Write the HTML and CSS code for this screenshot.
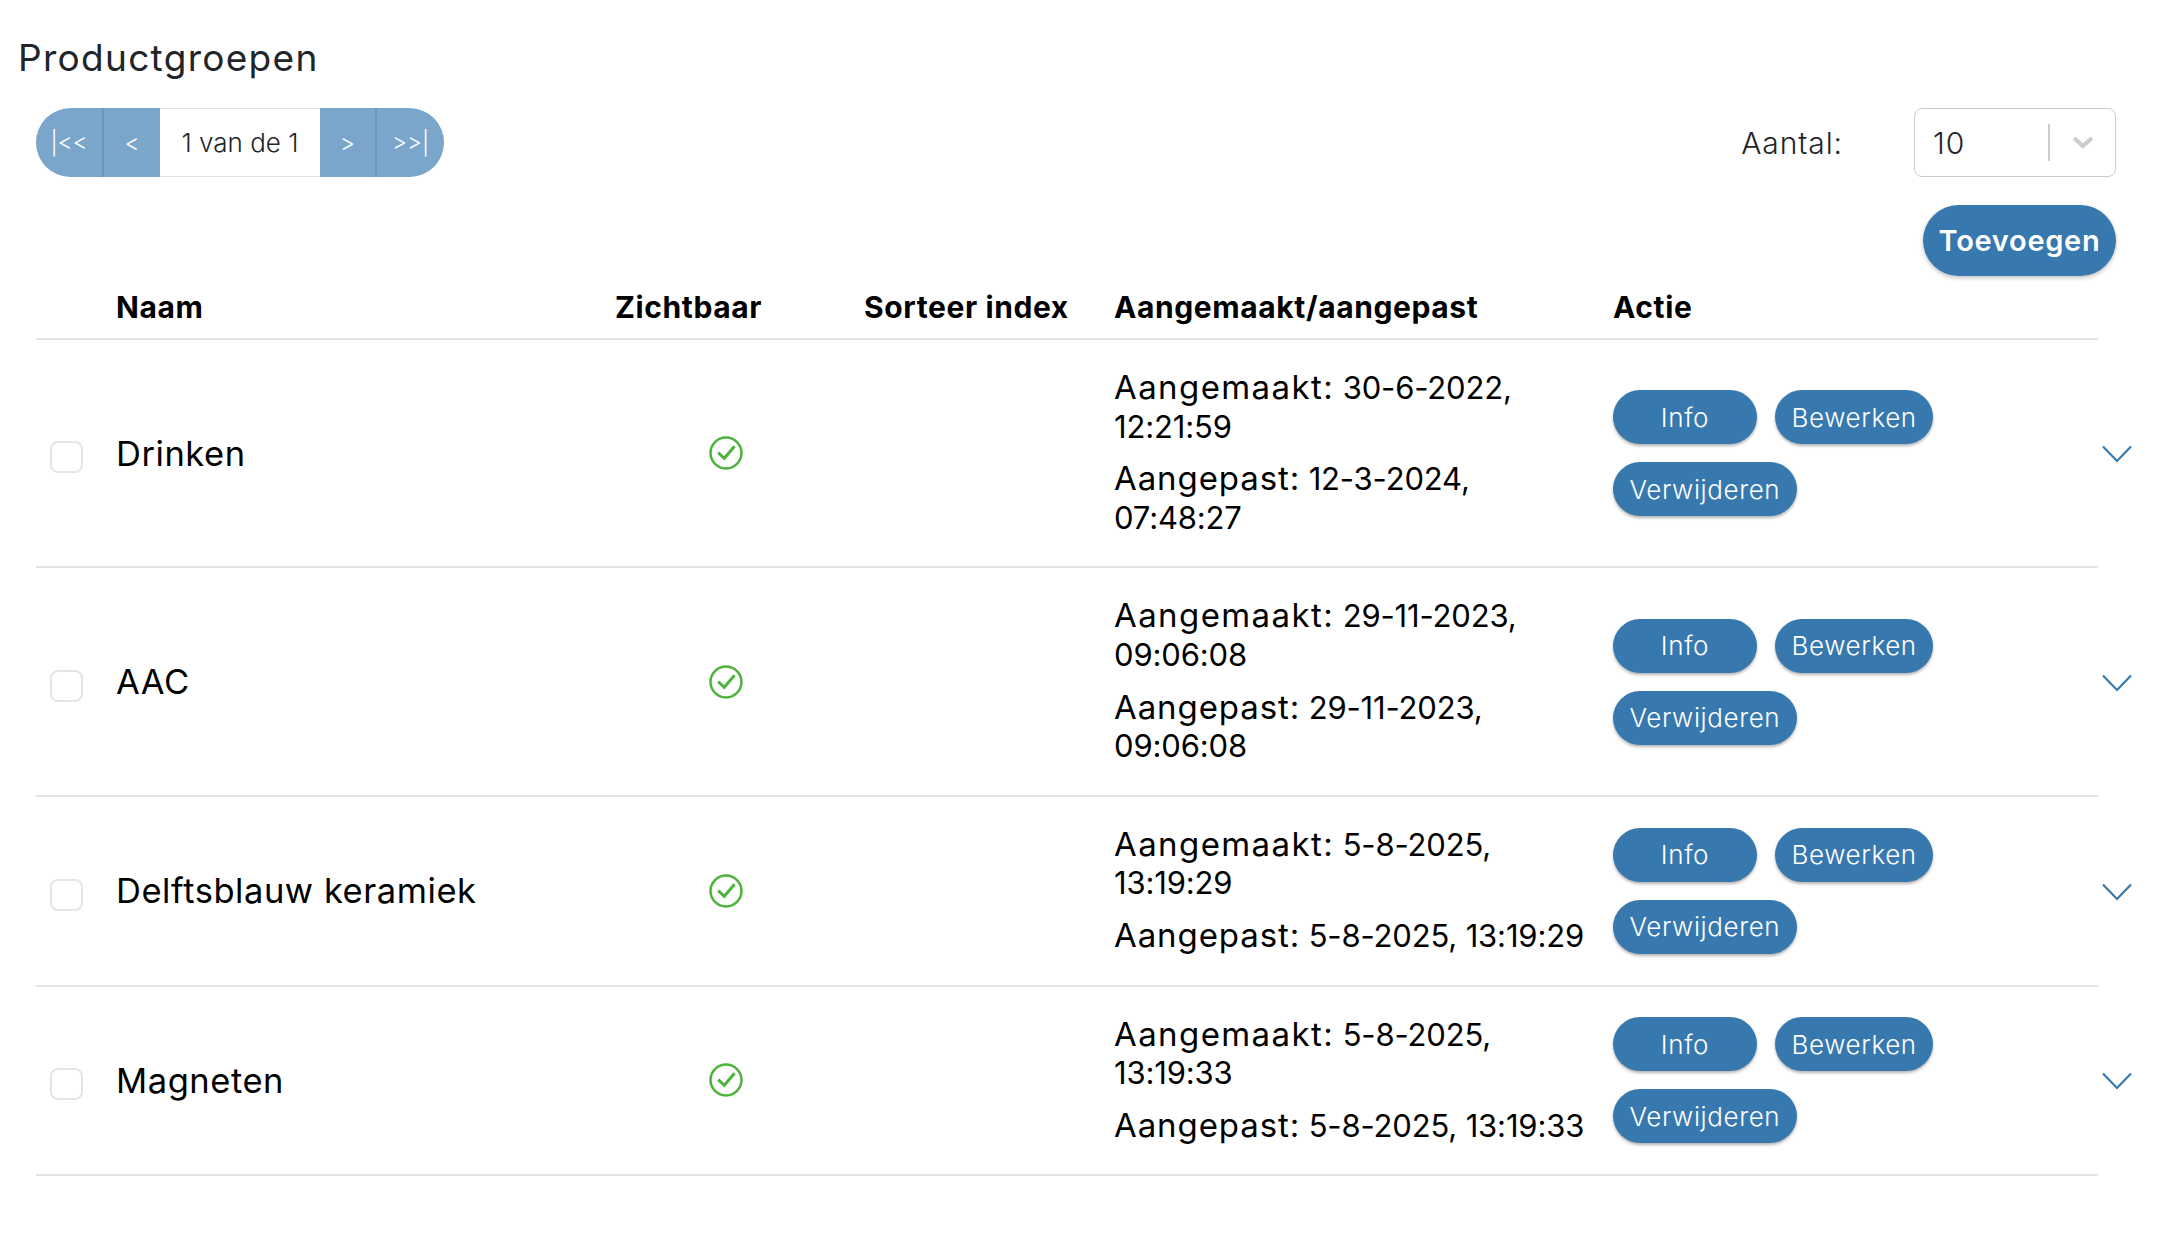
FILE: index.html
```html
<!DOCTYPE html>
<html lang="nl">

<head>
    <meta charset="UTF-8">
    <title>Productgroepen</title>
    <link rel="stylesheet" href="styles.css">
</head>

<body>

    <h1 class="page-title">Productgroepen</h1>

    <div class="toolbar">
        <div class="pager">
            <button class="pager-btn pager-first">|&lt;&lt;</button>
            <button class="pager-btn pager-prev">&lt;</button>
            <span class="pager-label">1 van de 1</span>
            <button class="pager-btn pager-next">&gt;</button>
            <button class="pager-btn pager-last">&gt;&gt;|</button>
        </div>
        <div class="page-size">
            <span class="page-size-label">Aantal:</span>
            <div class="select">
                <span class="select-value">10</span>
                <span class="select-sep"></span>
                <svg class="select-arrow" width="22" height="13" viewBox="0 0 22 13"><polyline points="2,2 11,10 20,2" /></svg>
            </div>
        </div>
    </div>

    <div class="add-row">
        <button class="add-btn">Toevoegen</button>
    </div>

    <table class="groups">
        <colgroup>
            <col class="col-select">
            <col class="col-name">
            <col class="col-visible">
            <col class="col-sort">
            <col class="col-date">
            <col class="col-action">
            <col class="col-toggle">
        </colgroup>
        <thead>
            <tr>
                <th></th>
                <th>Naam</th>
                <th>Zichtbaar</th>
                <th>Sorteer index</th>
                <th>Aangemaakt/aangepast</th>
                <th>Actie</th>
                <th class="toggle-cell"></th>
            </tr>
        </thead>
        <tbody>
            <tr>
                <td><span class="checkbox"></span></td>
                <td class="name">Drinken</td>
                <td class="visible"><svg width="34" height="34" viewBox="0 0 34 34"><circle cx="17" cy="17" r="15.5" /><polyline points="9.2,16.7 15.3,22.3 25.5,10.3" /></svg></td>
                <td></td>
                <td class="dates">
                    <p><span class="date-label">Aangemaakt:</span> 30-6-2022,<br>12:21:59</p>
                    <p><span class="date-label date-label-changed">Aangepast:</span> 12-3-2024,<br>07:48:27</p>
                </td>
                <td>
                    <div class="actions">
                        <button class="action-btn btn-info">Info</button>
                        <button class="action-btn">Bewerken</button>
                        <button class="action-btn">Verwijderen</button>
                    </div>
                </td>
                <td class="toggle-cell"><svg width="30" height="18" viewBox="0 0 30 18"><polyline points="1,1.5 15,16 29,1.5" /></svg></td>
            </tr>
            <tr>
                <td><span class="checkbox"></span></td>
                <td class="name">AAC</td>
                <td class="visible"><svg width="34" height="34" viewBox="0 0 34 34"><circle cx="17" cy="17" r="15.5" /><polyline points="9.2,16.7 15.3,22.3 25.5,10.3" /></svg></td>
                <td></td>
                <td class="dates">
                    <p><span class="date-label">Aangemaakt:</span> 29-11-2023,<br>09:06:08</p>
                    <p><span class="date-label date-label-changed">Aangepast:</span> 29-11-2023,<br>09:06:08</p>
                </td>
                <td>
                    <div class="actions">
                        <button class="action-btn btn-info">Info</button>
                        <button class="action-btn">Bewerken</button>
                        <button class="action-btn">Verwijderen</button>
                    </div>
                </td>
                <td class="toggle-cell"><svg width="30" height="18" viewBox="0 0 30 18"><polyline points="1,1.5 15,16 29,1.5" /></svg></td>
            </tr>
            <tr>
                <td><span class="checkbox"></span></td>
                <td class="name">Delftsblauw keramiek</td>
                <td class="visible"><svg width="34" height="34" viewBox="0 0 34 34"><circle cx="17" cy="17" r="15.5" /><polyline points="9.2,16.7 15.3,22.3 25.5,10.3" /></svg></td>
                <td></td>
                <td class="dates">
                    <p><span class="date-label">Aangemaakt:</span> 5-8-2025,<br>13:19:29</p>
                    <p><span class="date-label date-label-changed">Aangepast:</span> 5-8-2025, 13:19:29</p>
                </td>
                <td>
                    <div class="actions">
                        <button class="action-btn btn-info">Info</button>
                        <button class="action-btn">Bewerken</button>
                        <button class="action-btn">Verwijderen</button>
                    </div>
                </td>
                <td class="toggle-cell"><svg width="30" height="18" viewBox="0 0 30 18"><polyline points="1,1.5 15,16 29,1.5" /></svg></td>
            </tr>
            <tr>
                <td><span class="checkbox"></span></td>
                <td class="name">Magneten</td>
                <td class="visible"><svg width="34" height="34" viewBox="0 0 34 34"><circle cx="17" cy="17" r="15.5" /><polyline points="9.2,16.7 15.3,22.3 25.5,10.3" /></svg></td>
                <td></td>
                <td class="dates">
                    <p><span class="date-label">Aangemaakt:</span> 5-8-2025,<br>13:19:33</p>
                    <p><span class="date-label date-label-changed">Aangepast:</span> 5-8-2025, 13:19:33</p>
                </td>
                <td>
                    <div class="actions">
                        <button class="action-btn btn-info">Info</button>
                        <button class="action-btn">Bewerken</button>
                        <button class="action-btn">Verwijderen</button>
                    </div>
                </td>
                <td class="toggle-cell"><svg width="30" height="18" viewBox="0 0 30 18"><polyline points="1,1.5 15,16 29,1.5" /></svg></td>
            </tr>
        </tbody>
    </table>

</body>

</html>
```

FILE: styles.css
```css
body {
    margin: 0;
    background: #fff;
    color: #000;
    font-family: "Inter", "Open Sans", sans-serif;
    overflow-x: hidden;
}

button {
    font-family: inherit;
    border: none;
    cursor: pointer;
}

.page-title {
    margin: 0;
    padding: 36px 0 0 18px;
    height: 72px;
    box-sizing: border-box;
    font-size: 37px;
    line-height: 43px;
    font-weight: 400;
    letter-spacing: 1.3px;
    color: #212529;
}

.toolbar {
    display: flex;
    justify-content: space-between;
    padding: 36px 42px 0 36px;
}

.pager {
    display: flex;
    height: 69px;
    width: 408px;
}

.pager-btn {
    background: #7ba6cb;
    color: #fff;
    font-size: 23px;
    font-weight: 300;
    padding: 0;
}

.pager-first {
    width: 68px;
    border-radius: 35px 0 0 35px;
    border-right: 2px solid #6d96b9;
}

.pager-prev {
    width: 56px;
}

.pager-label {
    width: 160px;
    box-sizing: border-box;
    border-top: 1px solid #dee2e6;
    border-bottom: 1px solid #dee2e6;
    text-align: center;
    line-height: 67px;
    font-size: 26px;
    font-weight: 300;
    color: #212529;
}

.pager-next {
    width: 57px;
    border-right: 2px solid #6d96b9;
}

.pager-last {
    width: 67px;
    border-radius: 0 35px 35px 0;
}

.page-size {
    display: flex;
    align-items: center;
    gap: 71px;
    font-size: 30px;
    font-weight: 300;
    letter-spacing: 0.9px;
    color: #212529;
}

.select {
    display: flex;
    align-items: center;
    width: 202px;
    height: 69px;
    box-sizing: border-box;
    border: 1px solid #ccc;
    border-radius: 8px;
    padding-left: 18px;
}

.select-value {
    width: 115px;
}

.select-sep {
    width: 2px;
    height: 37px;
    background: #ccc;
}

.select-arrow {
    margin-left: 22px;
}

.select-arrow polyline {
    fill: none;
    stroke: #ccc;
    stroke-width: 4;
}

.add-row {
    display: flex;
    justify-content: flex-end;
    padding: 28px 42px 0 0;
}

.add-btn {
    width: 193px;
    height: 71px;
    border-radius: 36px;
    background: #3778ae;
    color: #fff;
    font-size: 29px;
    font-weight: 600;
    letter-spacing: 0.7px;
    padding: 0;
    box-shadow: 0 2px 4px rgba(0, 0, 0, 0.25);
}

.groups {
    table-layout: fixed;
    width: 2122px;
    margin-left: 36px;
    border-collapse: separate;
    border-spacing: 0;
}

.col-select { width: 80px; }
.col-name { width: 499px; }
.col-visible { width: 249px; }
.col-sort { width: 250px; }
.col-date { width: 499px; }
.col-action { width: 485px; }
.col-toggle { width: 60px; }

.groups th {
    height: 64px;
    padding: 0 0 1px;
    text-align: left;
    font-size: 30px;
    font-weight: 700;
    letter-spacing: 0.6px;
    border-bottom: 2px solid #e4e4e7;
    box-sizing: border-box;
}

.groups td {
    padding: 29px 0;
    border-bottom: 2px solid #e4e4e7;
    vertical-align: middle;
}

.groups .toggle-cell {
    border-bottom: none;
    padding: 0 0 0 4px;
}

.toggle-cell svg {
    display: block;
}

.toggle-cell polyline {
    fill: none;
    stroke: #3778ae;
    stroke-width: 2.2;
}

.checkbox {
    display: block;
    width: 33px;
    height: 32px;
    box-sizing: border-box;
    margin: 8px 0 0 14px;
    border: 2px solid #e4e4e9;
    border-radius: 8px;
}

.name {
    font-size: 34.5px;
    letter-spacing: 0.55px;
}

.visible {
    padding-left: 94px !important;
}

.visible svg {
    display: block;
}

.visible circle {
    fill: none;
    stroke: #4db33d;
    stroke-width: 2.5;
}

.visible polyline {
    fill: none;
    stroke: #4db33d;
    stroke-width: 3;
}

.dates {
    font-size: 31px;
    line-height: 38.6px;
    letter-spacing: -0.15px;
}

.dates p {
    margin: 0 0 14px;
}

.dates p:last-child {
    margin-bottom: 0;
}

.date-label {
    font-size: 33px;
    line-height: 1;
    letter-spacing: 1.4px;
}

.date-label-changed {
    letter-spacing: 0.9px;
}

.actions {
    display: flex;
    flex-wrap: wrap;
    gap: 18px;
}

.action-btn {
    height: 54px;
    padding: 0 16.5px;
    border-radius: 27px;
    background: #3778ae;
    color: #fff;
    font-size: 26px;
    font-weight: 300;
    letter-spacing: 0.6px;
    box-shadow: 0 2px 3px rgba(0, 0, 0, 0.3);
}

.btn-info {
    width: 144px;
}
```
